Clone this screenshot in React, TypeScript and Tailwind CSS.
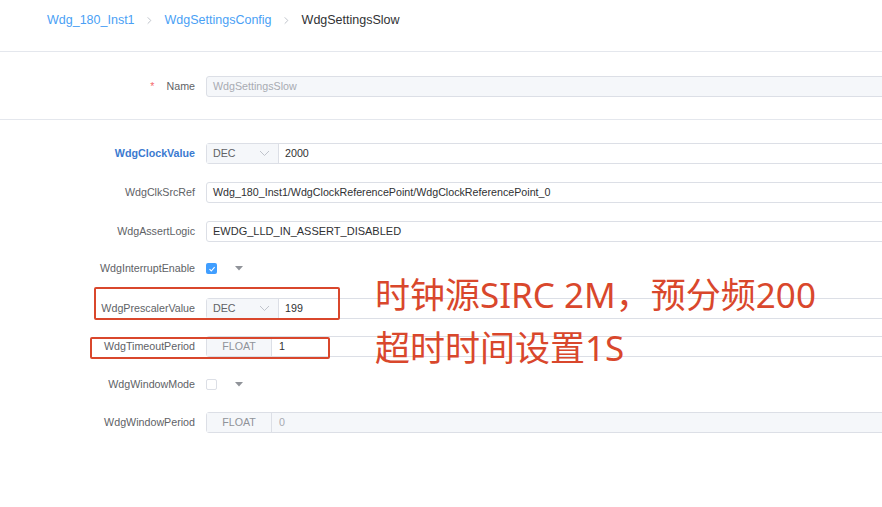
import React from "react";

const font = { fontFamily: '"Liberation Sans", Arial, sans-serif' };

function Chevron() {
  return (
    <svg width="9" height="9" viewBox="0 0 10 10" className="shrink-0">
      <path d="M3 1.5 L6.5 5 L3 8.5" fill="none" stroke="#b8bcc4" strokeWidth="1" />
    </svg>
  );
}

function SelectDown() {
  return (
    <svg width="11" height="7" viewBox="0 0 11 7">
      <path d="M1 1 L5.5 5.5 L10 1" fill="none" stroke="#c0c4cc" strokeWidth="1" />
    </svg>
  );
}

function Caret() {
  return (
    <svg width="8" height="5" viewBox="0 0 8 5">
      <path d="M0 0 L8 0 L4 4.5 Z" fill="#909399" />
    </svg>
  );
}

function Label({ children, blue }: { children: React.ReactNode; blue?: boolean }) {
  return (
    <div
      className={
        "w-[195px] shrink-0 text-right text-[10.7px] " +
        (blue ? "font-bold text-[#3b7ad0]" : "text-[#606266]")
      }
    >
      {children}
    </div>
  );
}

function Row({
  label,
  blue,
  children,
  className,
}: {
  label: string;
  blue?: boolean;
  children: React.ReactNode;
  className: string;
}) {
  return (
    <div className={"flex h-[21px] items-center gap-[11px] " + className}>
      <Label blue={blue}>{label}</Label>
      {children}
    </div>
  );
}

function BoxInput({ children, disabled }: { children: React.ReactNode; disabled?: boolean }) {
  return (
    <div
      className={
        "mr-[-20px] flex h-[21px] flex-1 items-center rounded-[3px] border border-[#dcdfe6] " +
        (disabled ? "bg-[#f5f7fa]" : "bg-white")
      }
    >
      {children}
    </div>
  );
}

function DecInput({ value }: { value: string }) {
  return (
    <BoxInput>
      <div className="flex h-full w-[72px] items-center justify-between border-r border-[#dcdfe6] bg-[#f5f7fa] pl-[6px] pr-[8px] text-[10.7px] text-[#606266]">
        <span>DEC</span>
        <SelectDown />
      </div>
      <span className="pl-[6px] text-[10.7px] text-[#303133]">{value}</span>
    </BoxInput>
  );
}

function FloatInput({ value, disabled }: { value: string; disabled?: boolean }) {
  return (
    <BoxInput disabled={disabled}>
      <div className="flex h-full w-[65px] items-center justify-center border-r border-[#dcdfe6] bg-[#f5f7fa] text-[10.7px] text-[#909399]">
        FLOAT
      </div>
      <span className={"pl-[7px] text-[10.7px] " + (disabled ? "text-[#a8abb2]" : "text-[#303133]")}>{value}</span>
    </BoxInput>
  );
}

function Check({ checked }: { checked?: boolean }) {
  return (
    <div className="flex items-center gap-[18px]">
      {checked ? (
        <div className="flex h-[11px] w-[11px] items-center justify-center rounded-[2px] bg-[#409eff]">
          <svg width="8" height="8" viewBox="0 0 8 8">
            <path d="M1.5 4.2 L3.3 6 L6.6 2.2" fill="none" stroke="white" strokeWidth="1.1" />
          </svg>
        </div>
      ) : (
        <div className="h-[11px] w-[11px] rounded-[2px] border border-[#dcdfe6] bg-white" />
      )}
      <Caret />
    </div>
  );
}

export default function App() {
  return (
    <div className="relative h-[507px] w-[882px] overflow-hidden bg-white" style={font}>
      {/* breadcrumb */}
      <div className="flex h-[51px] items-center gap-[10.5px] pb-[11px] pl-[47px] text-[12.5px]">
        <span className="text-[#4a9ff5]">Wdg_180_Inst1</span>
        <Chevron />
        <span className="text-[#4a9ff5]">WdgSettingsConfig</span>
        <Chevron />
        <span className="text-[#303133]">WdgSettingsSlow</span>
      </div>
      <div className="h-px bg-[#e4e7ed]" />

      {/* name */}
      <div className="pb-[22px] pt-[24px]">
        <div className="flex h-[21px] items-center gap-[11px]">
          <div className="flex w-[195px] shrink-0 justify-end gap-[12px] text-[10.7px] text-[#606266]">
            <span className="text-[#f56c6c]">*</span>
            <span>Name</span>
          </div>
          <BoxInput disabled>
            <span className="pl-[6px] text-[10.7px] text-[#a8abb2]">WdgSettingsSlow</span>
          </BoxInput>
        </div>
      </div>
      <div className="h-px bg-[#e4e7ed]" />

      {/* fields */}
      <div className="flex flex-col pt-[23px]">
        <Row label="WdgClockValue" blue className="">
          <DecInput value="2000" />
        </Row>
        <Row label="WdgClkSrcRef" className="mt-[18px]">
          <BoxInput>
            <span className="pl-[6px] text-[10.7px] text-[#303133]">
              Wdg_180_Inst1/WdgClockReferencePoint/WdgClockReferencePoint_0
            </span>
          </BoxInput>
        </Row>
        <Row label="WdgAssertLogic" className="mt-[18px]">
          <BoxInput>
            <span className="pl-[6px] text-[11px] text-[#303133]">EWDG_LLD_IN_ASSERT_DISABLED</span>
          </BoxInput>
        </Row>
        <Row label="WdgInterruptEnable" className="mt-[16px]">
          <Check checked />
        </Row>
        <Row label="WdgPrescalerValue" className="mt-[19px]">
          <DecInput value="199" />
        </Row>
        <Row label="WdgTimeoutPeriod" className="mt-[17px]">
          <FloatInput value="1" />
        </Row>
        <Row label="WdgWindowMode" className="mt-[17px]">
          <Check />
        </Row>
        <Row label="WdgWindowPeriod" className="mt-[17px]">
          <FloatInput value="0" disabled />
        </Row>
      </div>

      {/* annotations */}
      <div className="absolute left-[94px] top-[287px] h-[33px] w-[246px] rounded-[2px] border-2 border-[#d9472c]" />
      <div className="absolute left-[90px] top-[337px] h-[22px] w-[240px] rounded-[2px] border-2 border-[#d9472c]" />
      <div
        className="absolute left-[375px] top-[268px] text-[35px] leading-[53px] text-[#d9472c]"
        style={{ fontFamily: '"Noto Sans", "Noto Sans CJK SC", sans-serif' }}
      >
        <div>时钟源SIRC 2M，预分频200</div>
        <div>超时时间设置1S</div>
      </div>
    </div>
  );
}
